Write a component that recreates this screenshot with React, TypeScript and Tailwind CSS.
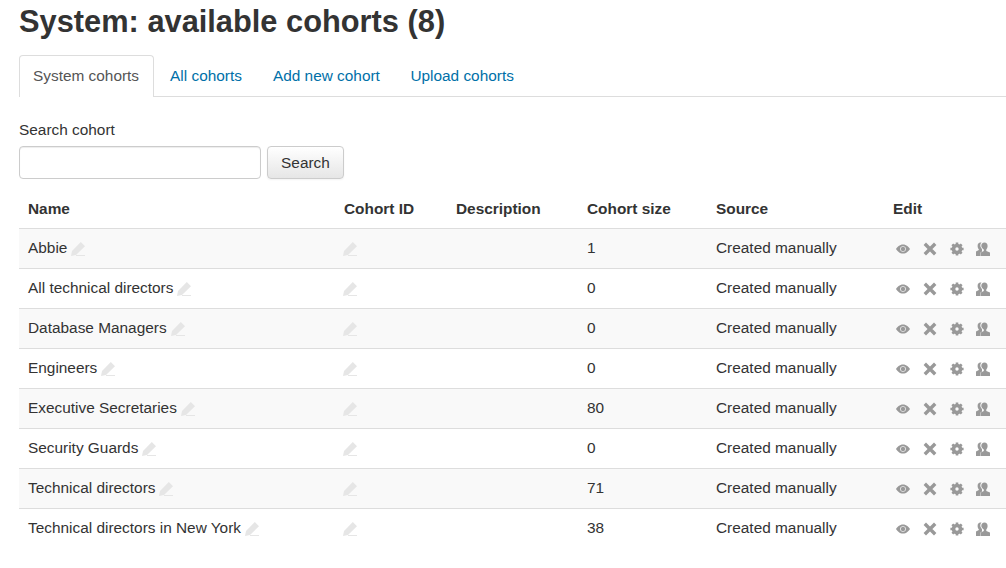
const rows = [
  { name: 'Abbie', size: 1 },
  { name: 'All technical directors', size: 0 },
  { name: 'Database Managers', size: 0 },
  { name: 'Engineers', size: 0 },
  { name: 'Executive Secretaries', size: 80 },
  { name: 'Security Guards', size: 0 },
  { name: 'Technical directors', size: 71 },
  { name: 'Technical directors in New York', size: 38 },
];

function Pencil({ className }: { className?: string }) {
  return (
    <svg viewBox="0 0 14 14" width="14" height="14" className={className} fill="#e6e6e6">
      <path d="M9.800 0 14 4.200 5 13 0 14 1 9Z" />
      <path d="M5 13h9v1H5z" />
    </svg>
  );
}

function Eye() {
  return (
    <svg viewBox="0 0 14 14" width="14" height="14" className="text-[#999]">
      <path
        fillRule="evenodd"
        fill="currentColor"
        d="M7 2.400C3.600 2.400 1.200 5 0 7c1.200 2 3.600 4.600 7 4.600S12.800 9 14 7c-1.200-2-3.600-4.600-7-4.600Zm0 1.800a2.800 2.800 0 1 1 0 5.600 2.800 2.800 0 0 1 0-5.600Z"
      />
      <circle cx="7" cy="7" r="2.200" fill="currentColor" />
    </svg>
  );
}

function Cross() {
  return (
    <svg viewBox="0 0 14 14" width="14" height="14">
      <path d="M1.800 1.800 12.200 12.200M12.200 1.800 1.800 12.200" stroke="#999" strokeWidth="3.400" />
    </svg>
  );
}

function Gear() {
  return (
    <svg viewBox="0 0 14 14" width="14" height="14">
      <circle cx="7" cy="7" r="3.500" fill="none" stroke="#999" strokeWidth="3.600" />
      <path
        d="M7 .4V13.600M.4 7H13.600M2.300 2.300 11.700 11.700M11.700 2.300 2.300 11.700"
        stroke="#999"
        strokeWidth="2.600"
        strokeDasharray="2.400 8.400 2.400 100"
      />
    </svg>
  );
}

function Person() {
  return (
    <svg viewBox="0 0 14 14" width="14" height="14" fill="#999">
      <path d="M4.500.6C2.600.6 1.600 2.100 1.600 4c0 1.500.6 2.600 1.200 3.300V8L0 9.400V14h4.500v-3.600l1.500-1V7C5 6 4.300 4.800 4.300 3.500 4.300 2.200 4.800 1.300 5.500.8 5.200.7 4.900.6 4.500.6Z" />
      <path d="M8.500.6c2 0 3.100 1.500 3.100 3.500 0 1.500-.6 2.700-1.300 3.400v1.400L14 10.400V14H4.800v-3.600l3-1.500V7.500C6.700 6.800 5.300 5.600 5.300 4.100 5.300 2.100 6.500.6 8.500.6Z" />
    </svg>
  );
}

export default function App() {
  return (
    <div className="h-[568px] overflow-hidden bg-white pl-[19px] font-['Liberation_Sans',Arial,sans-serif] text-[15.4px] leading-[22px] text-[#333]">
      <h2 className="h-[55px] pt-[2px] text-[30.8px] leading-[40px] font-bold text-[#333]">
        System: available cohorts (8)
      </h2>

      <nav className="flex h-[42px] border-b border-[#ddd]">
        <span className="h-[42px] rounded-t-[4px] border border-b-0 border-[#ddd] bg-white pl-[13px] pr-[14px] pt-[9px] text-[#555]">
          System cohorts
        </span>
        <a className="px-[16px] pt-[10px] text-[#0070a8]">All cohorts</a>
        <a className="pl-[15px] pr-[15px] pt-[10px] text-[#0070a8]">Add new cohort</a>
        <a className="pl-[15.5px] pt-[10px] text-[#0070a8]">Upload cohorts</a>
      </nav>

      <form className="mt-[22px]">
        <label className="block h-[27px]">Search cohort</label>
        <div className="flex gap-[6px]">
          <input className="h-[33px] w-[242px] rounded-[4px] border border-[#ccc] bg-white shadow-[inset_0_1px_1px_rgba(0,0,0,0.075)]" />
          <button
            type="button"
            className="h-[33px] w-[77px] rounded-[4px] border border-[#ccc] bg-gradient-to-b from-white to-[#e6e6e6] text-[15.4px] text-[#333] shadow-[0_1px_2px_rgba(0,0,0,0.05)]"
          >
            Search
          </button>
        </div>
      </form>

      <table className="mt-[10px] w-[1000px] table-fixed border-collapse">
        <thead>
          <tr className="h-[39px] text-left">
            <th className="w-[316px] pl-[9px] pt-[2px] font-bold">Name</th>
            <th className="w-[112px] pl-[9px] pt-[2px] font-bold">Cohort ID</th>
            <th className="w-[131px] pl-[9px] pt-[2px] font-bold">Description</th>
            <th className="w-[129px] pl-[9px] pt-[2px] font-bold">Cohort size</th>
            <th className="w-[177px] pl-[9px] pt-[2px] font-bold">Source</th>
            <th className="pl-[9px] pt-[2px] font-bold">Edit</th>
          </tr>
        </thead>
        <tbody>
          {rows.map((row, i) => (
            <tr key={row.name} className={`h-[40px] border-t border-[#ddd] ${i % 2 === 0 ? 'bg-[#f9f9f9]' : 'bg-white'}`}>
              <td className="pl-[9px]">
                <span className="inline-flex items-center gap-[4px]">
                  {row.name}
                  <Pencil className="mt-[1px]" />
                </span>
              </td>
              <td className="pl-[8px]">
                <Pencil className="mt-[1px]" />
              </td>
              <td></td>
              <td className="pl-[9px]">{row.size}</td>
              <td className="pl-[9px]">Created manually</td>
              <td className="pl-[12px]">
                <div className="mt-[1px] flex gap-[13px]">
                  <Eye />
                  <Cross />
                  <Gear />
                  <div className="-ml-[1px]">
                    <Person />
                  </div>
                </div>
              </td>
            </tr>
          ))}
        </tbody>
      </table>
    </div>
  );
}
